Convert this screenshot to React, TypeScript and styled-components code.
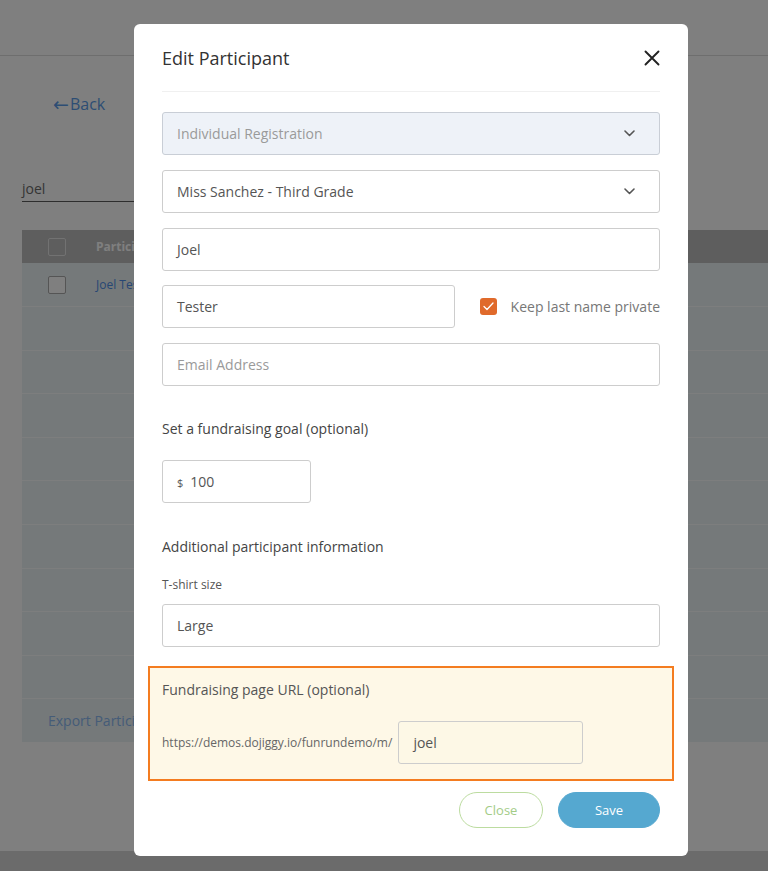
import React from "react";
import styled, { createGlobalStyle } from "styled-components";

const GlobalStyle = createGlobalStyle`
  html, body { margin: 0; padding: 0; }
  body { font-family: "Open Sans", "Liberation Sans", Arial, sans-serif; }
  * { box-sizing: border-box; }
`;

/* ---------- background page ---------- */

const Page = styled.div`
  position: relative;
  height: 871px;
  overflow: hidden;
  background: #ffffff;
  display: flex;
  flex-direction: column;
  font-family: "Open Sans", "Liberation Sans", Arial, sans-serif;
`;

const TopBar = styled.div`
  height: 56px;
  flex: 0 0 56px;
  border-bottom: 1px solid #dcdcdc;
`;

const BackLink = styled.a`
  display: flex;
  align-items: center;
  margin: 37px 0 0 53px;
  font-size: 16px;
  line-height: 22px;
  color: #5a9be8;
  text-decoration: none;
`;

const Arrow = styled.span`
  font-family: "DejaVu Sans", sans-serif;
  font-size: 19px;
  line-height: 22px;
  margin-right: 1px;
`;

const SearchField = styled.div`
  margin: 64px 0 0 22px;
  width: 270px;
  font-size: 14px;
  line-height: 20px;
  color: #6a6a6a;
  padding-bottom: 2px;
  border-bottom: 1px solid #5a5a5a;
`;

const Table = styled.div`
  margin: 28px 0 0 22px;
  width: 800px;
  background: #eaf2f4;
`;

const Row = styled.div<{ $head?: boolean; $first?: boolean }>`
  display: grid;
  grid-template-columns: 74px 200px 360px 1fr;
  align-items: center;
  height: ${(p) => (p.$head ? "33px" : p.$first ? "44px" : "43.6px")};
  background: ${(p) => (p.$head ? "#bcbcbc" : "transparent")};
  border-bottom: ${(p) => (p.$head ? "none" : "1px solid #fafcfd")};
  font-size: 12px;
  color: ${(p) => (p.$head ? "#ffffff" : "#333")};
  font-weight: ${(p) => (p.$head ? 700 : 400)};
`;

const TableBox = styled.span<{ $head?: boolean }>`
  display: block;
  width: 18px;
  height: 18px;
  margin-left: 26px;
  border: 1px solid ${(p) => (p.$head ? "#e4e4e4" : "#aaaaaa")};
  border-radius: 2px;
  background: ${(p) => (p.$head ? "transparent" : "#ffffff")};
`;

const NameLink = styled.span`
  color: #4f8fe8;
`;

const EmailCell = styled.span`
  font-size: 13px;
  color: #555;
`;

const TableFooter = styled.div`
  height: 43px;
  display: flex;
  align-items: center;
  padding-left: 26px;
  font-size: 14px;
  color: #8ab8f0;
`;

const BottomBar = styled.div`
  margin-top: auto;
  height: 20px;
  background: #d6d6d6;
`;

const Overlay = styled.div`
  position: absolute;
  inset: 0;
  background: rgba(0, 0, 0, 0.5);
`;

/* ---------- modal ---------- */

const Modal = styled.div`
  position: absolute;
  left: 134px;
  top: 24px;
  width: 554px;
  background: #ffffff;
  border-radius: 6px;
  padding: 0 28px 28px;
  color: #333;
`;

const ModalHeader = styled.div`
  display: flex;
  align-items: center;
  justify-content: space-between;
  padding: 22px 0 21px;
  border-bottom: 1px solid #f0f0f0;
`;

const Title = styled.h2`
  margin: 0;
  font-size: 18px;
  line-height: 24px;
  font-weight: 500;
  color: #333;
`;

const CloseIcon = styled.button`
  border: none;
  background: none;
  padding: 0;
  width: 16px;
  height: 16px;
  display: flex;
  cursor: pointer;
`;

const Body = styled.div`
  padding-top: 20px;
  display: flex;
  flex-direction: column;
`;

const Field = styled.div<{ $disabled?: boolean; $width?: string; $bg?: string }>`
  display: flex;
  align-items: center;
  justify-content: space-between;
  height: 43px;
  width: ${(p) => p.$width || "100%"};
  flex: ${(p) => (p.$width ? `0 0 ${p.$width}` : "none")};
  padding: 0 24px 0 14px;
  border: 1px solid ${(p) => (p.$disabled ? "#c9ced6" : "#cdcdcd")};
  border-radius: 3px;
  background: ${(p) => (p.$disabled ? "#eef2f8" : p.$bg || "#ffffff")};
  font-size: 14px;
  color: #555;
`;

const FieldText = styled.span<{ $muted?: boolean }>`
  color: ${(p) => (p.$muted ? "#9a9a9a" : "#555")};
`;

const Stack = styled.div`
  display: flex;
  flex-direction: column;
  gap: 14.75px;
`;

const NameRow = styled.div`
  display: flex;
  align-items: center;
`;

const CheckLabel = styled.label`
  display: flex;
  align-items: center;
  margin-left: auto;
  gap: 14px;
  font-size: 14px;
  color: #777;
`;

const CheckBox = styled.span`
  width: 17px;
  height: 17px;
  border-radius: 3px;
  background: #e06a2b;
  display: flex;
  align-items: center;
  justify-content: center;
`;

const SectionTitle = styled.h3<{ $top: number }>`
  margin: ${(p) => p.$top}px 0 0;
  font-size: 14px;
  line-height: 20px;
  font-weight: 500;
  color: #444;
`;

const Currency = styled.span`
  font-size: 11px;
  color: #555;
  margin-right: 7px;
`;

const SmallLabel = styled.div`
  margin-top: 20px;
  font-size: 12px;
  line-height: 16px;
  color: #555;
`;

const Spaced = styled.div<{ $top: number }>`
  margin-top: ${(p) => p.$top}px;
`;

const Highlight = styled.div`
  margin: 19px -14px 0;
  border: 2px solid #f47c20;
  background: #fef8e7;
  padding: 12px 12px 15px;
`;

const HighlightTitle = styled.div`
  font-size: 14px;
  line-height: 20px;
  font-weight: 500;
  color: #555;
`;

const UrlRow = styled.div`
  margin-top: 21px;
  display: flex;
  align-items: center;
  gap: 6px;
`;

const UrlPrefix = styled.span`
  font-size: 12px;
  color: #666;
  white-space: nowrap;
`;

const Actions = styled.div`
  margin-top: 11px;
  display: flex;
  justify-content: flex-end;
  gap: 15px;
`;

const PillButton = styled.button<{ $primary?: boolean; $width: number }>`
  height: 36px;
  width: ${(p) => p.$width}px;
  border-radius: 18px;
  font-family: inherit;
  font-size: 13px;
  cursor: pointer;
  border: 1px solid ${(p) => (p.$primary ? "#55a8d0" : "#bcdca0")};
  background: ${(p) => (p.$primary ? "#55a8d0" : "#ffffff")};
  color: ${(p) => (p.$primary ? "#ffffff" : "#a3cc87")};
`;

const Chevron = () => (
  <svg width="11" height="7" viewBox="0 0 11 7" fill="none">
    <path d="M1 1l4.5 4.5L10 1" stroke="#555" strokeWidth="1.6" strokeLinecap="round" strokeLinejoin="round" />
  </svg>
);

const rows = Array.from({ length: 9 });

export default function App() {
  return (
    <>
      <GlobalStyle />
      <Page>
        <TopBar />
        <BackLink>
          <Arrow>←</Arrow>Back
        </BackLink>
        <SearchField>joel</SearchField>
        <Table>
          <Row $head>
            <TableBox $head />
            <span>Participant</span>
            <span />
            <span />
          </Row>
          <Row $first>
            <TableBox />
            <NameLink>Joel Tester</NameLink>
            <EmailCell>joel@dojiggy.com</EmailCell>
            <span />
          </Row>
          {rows.map((_, i) => (
            <Row key={i} />
          ))}
          <TableFooter>Export Participants</TableFooter>
        </Table>
        <BottomBar />
        <Overlay />
        <Modal>
          <ModalHeader>
            <Title>Edit Participant</Title>
            <CloseIcon aria-label="Close">
              <svg width="16" height="16" viewBox="0 0 16 16">
                <path d="M1.5 1.5l13 13M14.5 1.5l-13 13" stroke="#222" strokeWidth="1.9" strokeLinecap="round" />
              </svg>
            </CloseIcon>
          </ModalHeader>
          <Body>
            <Stack>
              <Field $disabled>
                <FieldText $muted>Individual Registration</FieldText>
                <Chevron />
              </Field>
              <Field>
                <FieldText>Miss Sanchez - Third Grade</FieldText>
                <Chevron />
              </Field>
              <Field>
                <FieldText>Joel</FieldText>
              </Field>
              <NameRow>
                <Field $width="293px">
                  <FieldText>Tester</FieldText>
                </Field>
                <CheckLabel>
                  <CheckBox>
                    <svg width="11" height="9" viewBox="0 0 11 9" fill="none">
                      <path d="M1 4.5l3 3L10 1" stroke="#fff" strokeWidth="1.3" strokeLinecap="round" strokeLinejoin="round" />
                    </svg>
                  </CheckBox>
                  Keep last name private
                </CheckLabel>
              </NameRow>
              <Field>
                <FieldText $muted>Email Address</FieldText>
              </Field>
            </Stack>

            <SectionTitle $top={33}>Set a fundraising goal (optional)</SectionTitle>
            <Spaced $top={21}>
              <Field $width="149px">
                <span>
                  <Currency>$</Currency>
                  <FieldText>100</FieldText>
                </span>
              </Field>
            </Spaced>

            <SectionTitle $top={34}>Additional participant information</SectionTitle>
            <SmallLabel>T-shirt size</SmallLabel>
            <Spaced $top={11}>
              <Field>
                <FieldText>Large</FieldText>
              </Field>
            </Spaced>

            <Highlight>
              <HighlightTitle>Fundraising page URL (optional)</HighlightTitle>
              <UrlRow>
                <UrlPrefix>https://demos.dojiggy.io/funrundemo/m/</UrlPrefix>
                <Field $width="185px" $bg="#fdf8e6">
                  <FieldText>joel</FieldText>
                </Field>
              </UrlRow>
            </Highlight>

            <Actions>
              <PillButton $width={84}>Close</PillButton>
              <PillButton $primary $width={102}>Save</PillButton>
            </Actions>
          </Body>
        </Modal>
      </Page>
    </>
  );
}
